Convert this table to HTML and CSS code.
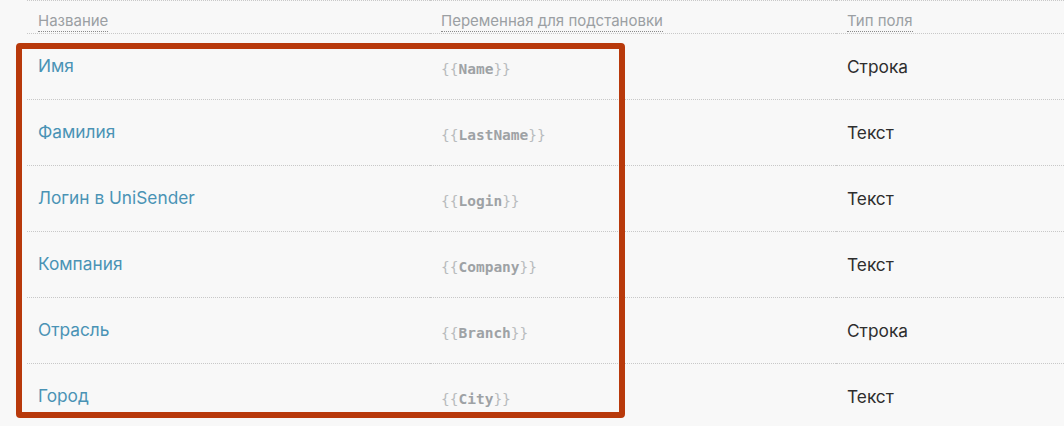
FILE: index.html
```html
<!DOCTYPE html>
<html lang="ru">
<head>
<meta charset="utf-8">
<link rel="stylesheet" href="styles.css">
</head>
<body>
<div class="wrap">
  <table class="fields">
    <thead>
      <tr>
        <th class="c1"><span class="hd">Название</span></th>
        <th class="c2"><span class="hd">Переменная для подстановки</span></th>
        <th class="c3"><span class="hd">Тип поля</span></th>
      </tr>
    </thead>
    <tbody>
      <tr><td class="c1"><a class="name">Имя</a></td><td class="c2"><code class="var"><span class="br">{{</span><b>Name</b><span class="br">}}</span></code></td><td class="c3">Строка</td></tr>
      <tr><td class="c1"><a class="name">Фамилия</a></td><td class="c2"><code class="var"><span class="br">{{</span><b>LastName</b><span class="br">}}</span></code></td><td class="c3">Текст</td></tr>
      <tr><td class="c1"><a class="name">Логин в UniSender</a></td><td class="c2"><code class="var"><span class="br">{{</span><b>Login</b><span class="br">}}</span></code></td><td class="c3">Текст</td></tr>
      <tr><td class="c1"><a class="name">Компания</a></td><td class="c2"><code class="var"><span class="br">{{</span><b>Company</b><span class="br">}}</span></code></td><td class="c3">Текст</td></tr>
      <tr><td class="c1"><a class="name">Отрасль</a></td><td class="c2"><code class="var"><span class="br">{{</span><b>Branch</b><span class="br">}}</span></code></td><td class="c3">Строка</td></tr>
      <tr><td class="c1"><a class="name">Город</a></td><td class="c2"><code class="var"><span class="br">{{</span><b>City</b><span class="br">}}</span></code></td><td class="c3">Текст</td></tr>
    </tbody>
  </table>
  <div class="highlight"></div>
</div>
</body>
</html>
```
FILE: styles.css
```css
html, body {
  margin: 0;
  padding: 0;
  background: #f8f8f8;
  font-family: Inter, "Noto Sans", sans-serif;
  overflow: hidden;
}
.wrap {
  position: relative;
  padding-left: 27px;
  height: 426px;
}
.fields {
  width: 1037px;
  border-collapse: collapse;
  border-top: 1px dotted #c8c8c8;
}
.fields th, .fields td {
  padding: 0 0 0 11px;
  text-align: left;
  border-bottom: 1px dotted #c8c8c8;
}
.c1 { width: 392px; }
.c2 { width: 395px; }
.fields th {
  height: 33px;
  font-weight: normal;
  font-size: 15px;
  color: #9b9fa3;
  vertical-align: top;
  padding-top: 10px;
  box-sizing: border-box;
}
.hd {
  border-bottom: 1px dotted #8a8a8a;
  padding-bottom: 1px;
  line-height: 18px;
  display: inline-block;
}
.fields td {
  height: 65px;
  font-size: 17.3px;
  color: #2e2e2e;
  vertical-align: middle;
}
.fields td > * { position: relative; top: -1px; }
.name {
  color: #4a93b5;
}
.var {
  font-family: "DejaVu Sans Mono", "Liberation Mono", monospace;
  font-size: 14.5px;
  color: #a2a6a9;
}
.fields td > .var { top: 1px; }
.var b { font-weight: bold; color: #9ea2a5; }
.var .br { color: #b9bcbe; }
.highlight {
  position: absolute;
  left: 16px;
  top: 43px;
  width: 609px;
  height: 375px;
  box-sizing: border-box;
  border: 6px solid #b8390b;
  border-radius: 4px;
  pointer-events: none;
}
```
